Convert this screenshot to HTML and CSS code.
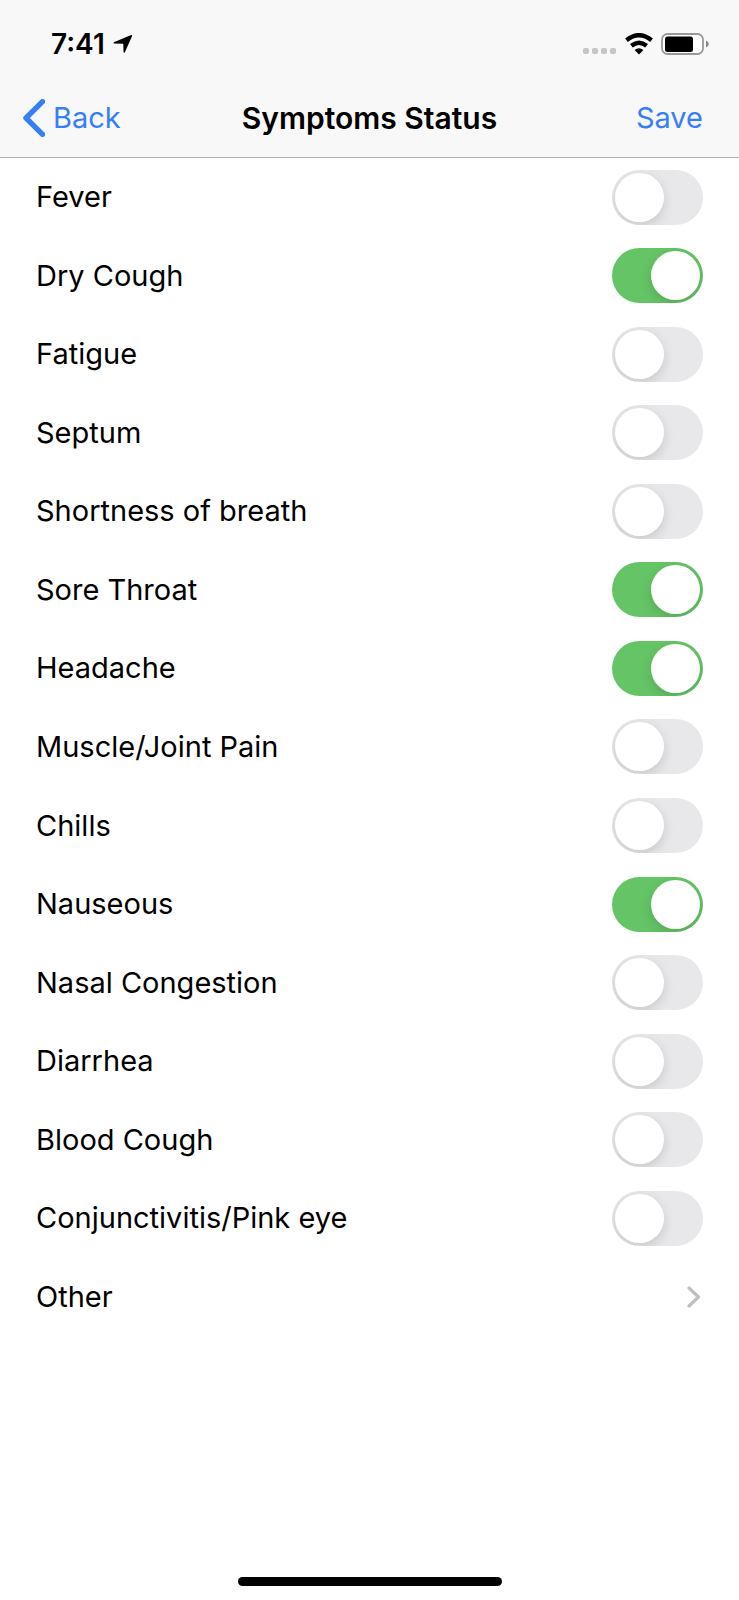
FILE: index.html
```html
<!DOCTYPE html>
<html lang="en">
<head>
<meta charset="utf-8">
<meta name="viewport" content="width=device-width, initial-scale=1">
<title>Symptoms Status</title>
<link rel="stylesheet" href="styles.css">
</head>
<body>
<header class="header">
  <div class="status">
    <div class="status-left">
      <time class="clock">7:41</time>
      <svg class="location" width="20" height="20" viewBox="0 0 20 20" aria-hidden="true"><path d="M17.6 1.2Q19.6 .4 18.9 2.4L12 18Q11 19.8 10.5 17.8L10.3 10.3Q10.2 9.8 9.7 9.8L1.6 9.6Q-.4 9.1 1.4 8Z"/></svg>
    </div>
    <div class="status-right">
      <svg width="34" height="22" viewBox="0 0 34 22" aria-hidden="true" fill="#c6c6c6"><rect y="15" width="6" height="6" rx="2"/><rect x="9" y="15" width="6" height="6" rx="2"/><rect x="18" y="15" width="6" height="6" rx="2"/><rect x="27" y="15" width="6" height="6" rx="2"/></svg>
      <svg class="wifi" width="28" height="22" viewBox="0 0 28 22" aria-hidden="true"><path d="M1.5 7.2Q14 -2.8 26.5 7.2M6.4 12.8Q14 6.6 21.6 12.8" fill="none" stroke="#000" stroke-width="4.4"/><path d="M9.6 17Q14 13.4 18.4 17L14.5 20.9Q14 21.4 13.5 20.9Z"/></svg>
      <svg width="48" height="22" viewBox="0 0 48 22" aria-hidden="true"><rect x="1" y="1" width="41" height="20" rx="5.5" fill="#fff" stroke="#999" stroke-width="1.8"/><rect x="4" y="3.5" width="28" height="15.5" rx="2.5"/><path d="M45 7.5Q47.8 8.5 47.8 11T45 14.5Z" fill="#888"/></svg>
    </div>
  </div>
  <nav class="nav">
    <button class="nav-button back" type="button"><svg width="22" height="38" viewBox="0 0 22 38" aria-hidden="true"><path d="M19.5 2.7L3 19L19.5 35.3" fill="none" stroke="#367ff7" stroke-width="5.4" stroke-linecap="round" stroke-linejoin="round"/></svg>Back</button>
    <h1 class="title">Symptoms Status</h1>
    <button class="nav-button save" type="button">Save</button>
  </nav>
</header>
<main class="list">
  <label class="row">Fever<input class="switch" type="checkbox" role="switch"></label>
  <label class="row">Dry Cough<input class="switch" type="checkbox" role="switch" checked></label>
  <label class="row">Fatigue<input class="switch" type="checkbox" role="switch"></label>
  <label class="row">Septum<input class="switch" type="checkbox" role="switch"></label>
  <label class="row">Shortness of breath<input class="switch" type="checkbox" role="switch"></label>
  <label class="row">Sore Throat<input class="switch" type="checkbox" role="switch" checked></label>
  <label class="row">Headache<input class="switch" type="checkbox" role="switch" checked></label>
  <label class="row">Muscle/Joint Pain<input class="switch" type="checkbox" role="switch"></label>
  <label class="row">Chills<input class="switch" type="checkbox" role="switch"></label>
  <label class="row">Nauseous<input class="switch" type="checkbox" role="switch" checked></label>
  <label class="row">Nasal Congestion<input class="switch" type="checkbox" role="switch"></label>
  <label class="row">Diarrhea<input class="switch" type="checkbox" role="switch"></label>
  <label class="row">Blood Cough<input class="switch" type="checkbox" role="switch"></label>
  <label class="row">Conjunctivitis/Pink eye<input class="switch" type="checkbox" role="switch"></label>
  <button class="row other" type="button">Other<svg width="14" height="22" viewBox="0 0 14 22" aria-hidden="true"><path d="M2 2L11.5 11L2 20" fill="none" stroke="#c0c0c0" stroke-width="3.2" stroke-linecap="round" stroke-linejoin="round"/></svg></button>
</main>
<footer class="footer"><div class="home"></div></footer>
</body>
</html>
```
FILE: styles.css
```css
* {
  box-sizing: border-box;
}

body {
  display: flex;
  flex-direction: column;
  min-height: 100vh;
  margin: 0;
  background: #fff;
  color: #000;
  font: 400 29px/36px Inter, "Liberation Sans", sans-serif;
}

button {
  padding: 0;
  border: 0;
  background: none;
  color: inherit;
  font: inherit;
  text-align: left;
  cursor: pointer;
}

svg {
  display: block;
  flex: none;
}

.header {
  padding-top: 26px;
  background: #f8f8f8;
  border-bottom: 1px solid #b2b2b2;
}

.status {
  display: flex;
  justify-content: space-between;
  align-items: center;
  height: 36px;
  padding: 0 30px 0 51px;
}

.status-left,
.status-right {
  display: flex;
  align-items: center;
  gap: 8px;
}

.clock {
  font-size: 28px;
  font-weight: 600;
}

.nav {
  display: grid;
  grid-template-columns: 1fr auto 1fr;
  align-items: center;
  height: 95px;
  padding: 16px 23px 0;
}

.nav-button {
  color: #367ff7;
}

.back {
  display: flex;
  align-items: center;
  justify-self: start;
  gap: 8px;
}

.title {
  margin: 0;
  font-size: 30px;
  font-weight: 600;
}

.save {
  justify-self: end;
  padding-right: 13px;
}

.list {
  display: grid;
  grid-auto-rows: 1fr;
  min-height: 1178px;
}

.row {
  display: flex;
  align-items: center;
  justify-content: space-between;
  padding: 0 36px;
}

.other {
  padding-right: 38px;
}

.switch {
  appearance: none;
  flex: none;
  width: 91px;
  height: 55px;
  margin: 0;
  padding: 3px;
  overflow: hidden;
  border-radius: 28px;
  background: #e8e8ea;
  cursor: pointer;
}

.switch::before {
  content: "";
  display: block;
  width: 49px;
  height: 49px;
  border-radius: 50%;
  background: #fff;
  box-shadow: 0 4px 12px rgba(0, 0, 0, 0.14);
}

.switch:checked {
  background: #65c466;
}

.switch:checked::before {
  margin-left: auto;
}

.footer {
  display: flex;
  justify-content: center;
  margin-top: auto;
  padding-bottom: 14px;
}

.home {
  width: 264px;
  height: 9px;
  border-radius: 5px;
  background: #000;
}
```
